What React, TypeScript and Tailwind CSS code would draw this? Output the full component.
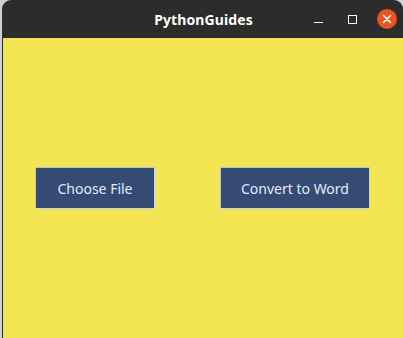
export default function App() {
  return (
    <div className="w-[403px] h-[338px] bg-[#cfcfcf] overflow-hidden" style={{ fontFamily: '"Noto Sans", "DejaVu Sans", sans-serif' }}>
      <div className="ml-[2px] h-full flex flex-col rounded-tl-[9px] rounded-tr-[9px] overflow-hidden bg-[#2c2c2c]">
        {/* Title bar */}
        <div className="relative h-[38px] shrink-0 flex items-center justify-center">
          <span className="text-white font-bold text-[14px] tracking-[0.1px] ml-[2px]">PythonGuides</span>
          <div className="absolute right-0 top-0 h-full flex items-center">
            <div className="w-[9px] h-[1.5px] bg-white mt-[7px] mr-[25px]" />
            <div className="w-[9px] h-[9px] border-[1.5px] border-white mr-[20px]" />
            <div className="w-[20px] h-[20px] rounded-full bg-[#e95420] flex items-center justify-center mr-[6px]">
              <svg width="10" height="10" viewBox="0 0 10 10">
                <path d="M1.5 1.5 L8.5 8.5 M8.5 1.5 L1.5 8.5" stroke="white" strokeWidth="1.6" strokeLinecap="round" />
              </svg>
            </div>
          </div>
        </div>
        {/* Content */}
        <div className="flex-1 ml-[1px] bg-[#f3e552] pt-[129px] pl-[32px] flex items-start gap-[65px]">
          <button className="w-[120px] h-[42px] bg-[#354b74] text-[#e4ebf3] text-[14px] border border-t-[#b9c3d4] border-l-[#b9c3d4] border-b-[#c9d2e0] border-r-[#c9d2e0]">
            Choose File
          </button>
          <button className="w-[150px] h-[42px] bg-[#354b74] text-[#e4ebf3] text-[14px] border border-t-[#b9c3d4] border-l-[#b9c3d4] border-b-[#c9d2e0] border-r-[#c9d2e0]">
            Convert to Word
          </button>
        </div>
      </div>
    </div>
  );
}
